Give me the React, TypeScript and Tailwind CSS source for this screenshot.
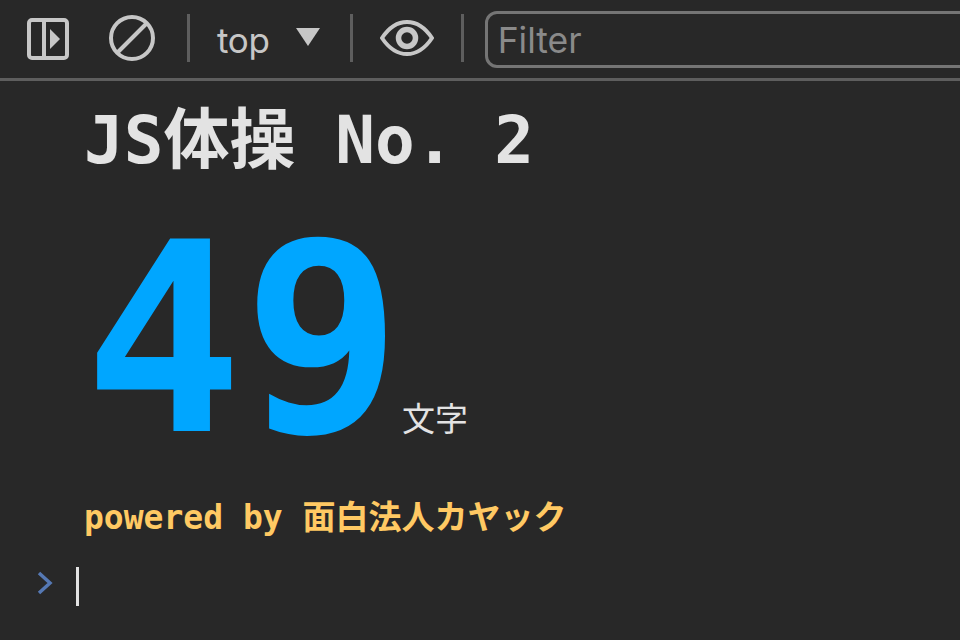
export default function App() {
  const mono = "font-['DejaVu_Sans_Mono','Noto_Sans_CJK_JP',monospace]";
  return (
    <div className="w-[960px] h-[640px] overflow-hidden bg-[#282828] font-['Inter','Noto_Sans_CJK_JP',sans-serif]">
      <div className="h-[81px] border-b-[3px] border-[#5e5e5e] flex items-center pl-[27px]">
        <svg width="42" height="42" viewBox="0 0 42 42" className="shrink-0 -mt-[1px]" fill="none">
          <rect x="2" y="2" width="38" height="38" rx="3" stroke="#c7c7c7" strokeWidth="4" />
          <rect x="15" y="2" width="4" height="38" fill="#c7c7c7" />
          <path d="M23 11 L33 21 L23 31 Z" fill="#c7c7c7" />
        </svg>
        <svg width="46" height="46" viewBox="0 0 46 46" className="shrink-0 ml-[40px] -mt-[2px]" fill="none">
          <circle cx="23" cy="23" r="21" stroke="#c7c7c7" strokeWidth="4" />
          <path d="M9 37 L37 9" stroke="#c7c7c7" strokeWidth="4" />
        </svg>
        <div className="w-[3px] h-[48px] bg-[#5e5e5e] ml-[32px] shrink-0 -mt-[2px]" />
        <span className="ml-[27px] text-[35px] leading-none text-[#c7c7c7] tracking-[-0.3px] mt-[2px]">top</span>
        <svg width="24" height="18" viewBox="0 0 24 18" className="ml-[26px] shrink-0 -mt-[5px]">
          <path d="M0 0 H24 L12 18 Z" fill="#c7c7c7" />
        </svg>
        <div className="w-[3px] h-[48px] bg-[#5e5e5e] ml-[30px] shrink-0 -mt-[2px]" />
        <svg width="54" height="36" viewBox="0 0 54 36" className="ml-[27px] shrink-0 -mt-[2px]" fill="none">
          <path d="M2 18 C10 6 18 2 27 2 C36 2 44 6 52 18 C44 30 36 34 27 34 C18 34 10 30 2 18 Z" stroke="#c7c7c7" strokeWidth="4" />
          <circle cx="27" cy="18" r="8.5" stroke="#c7c7c7" strokeWidth="5.5" />
        </svg>
        <div className="w-[3px] h-[48px] bg-[#5e5e5e] ml-[27px] shrink-0 -mt-[2px]" />
        <div className="ml-[21px] flex-1 -mr-[20px] h-[57px] border-[3px] border-[#757575] rounded-[12px] flex items-center pl-[10px] mt-[1px]">
          <span className="text-[35.5px] leading-none text-[#8a8a8a] mt-[2px]">Filter</span>
        </div>
      </div>
      <div className="pl-[84px]">
        <div className={`${mono} font-bold text-[66px] leading-[76px] mt-[22px] text-[#e3e3e3] whitespace-pre`}>JS体操 No. 2</div>
        <div className="flex items-baseline mt-[36px]">
          <span className={`${mono} font-bold text-[264px] leading-[250px] text-[#00a6ff]`}>49</span>
          <span className="text-[33px] leading-none text-[#e3e3e3]">文字</span>
        </div>
        <div className={`${mono} font-bold text-[33px] leading-[40px] mt-[33px] text-[#ffc963] whitespace-pre`}>powered by 面白法人カヤック</div>
      </div>
      <div className="flex items-center pl-[37px] mt-[29px]">
        <svg width="16" height="24" viewBox="0 0 16 24" fill="none" className="shrink-0 -mt-[7px]">
          <path d="M2 2 L13 12 L2 22" stroke="#5578b3" strokeWidth="3.5" />
        </svg>
        <div className="w-[3px] h-[39px] bg-[#e3e3e3] ml-[23px]" />
      </div>
    </div>
  );
}
